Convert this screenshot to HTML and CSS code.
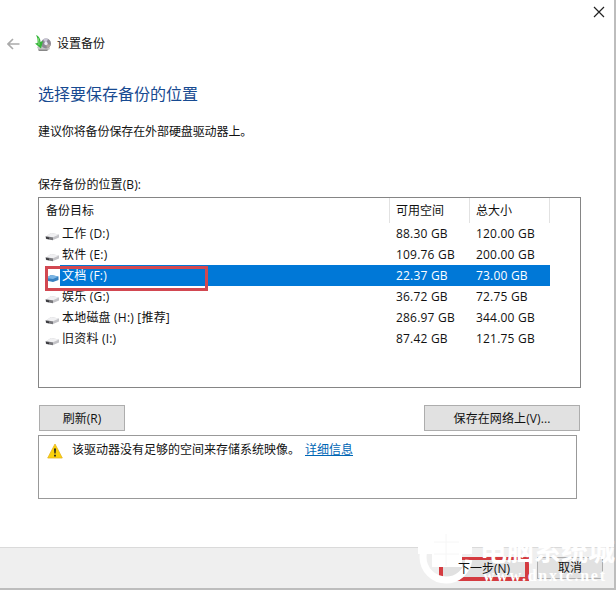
FILE: index.html
```html
<!DOCTYPE html>
<html lang="zh-CN">
<head>
<meta charset="utf-8">
<title>设置备份</title>
<link rel="stylesheet" href="styles.css">
</head>
<body>
<svg class="defs" width="0" height="0">
  <symbol id="drive" viewBox="0 0 15 9">
    <path d="M1 4.5 L6 1 L14 2.5 L14 5.5 L8 8 L1 6.5Z" fill="#c3c3c7"/>
    <path d="M1 4.3 L6 1 L14 2.5 L8 5.3Z" fill="#f0f0f2"/>
    <path d="M.5 4.3 L8 5.5 V8.2 L1 7Z" fill="#77777b"/>
    <path d="M1 5 L4 5.6 V7.2 L1 6.6Z" fill="#343438"/>
  </symbol>
</svg>
<div class="window">
  <div class="titlebar">
    <svg class="close" width="12" height="12" viewBox="0 0 12 12"><path d="M1 1 L11 11 M11 1 L1 11" stroke="#222" stroke-width="1.2"/></svg>
  </div>
  <header class="nav">
    <svg class="back" width="13" height="12" viewBox="0 0 13 12"><path d="M12.5 6 H1.2 M6 1 L1 6 L6 11" fill="none" stroke="#aaa" stroke-width="1.6"/></svg>
    <svg class="app-icon" width="17" height="17" viewBox="0 0 17 17">
      <path d="M2 12 L5 10 H14 L15 14 L12 16 H4Z" fill="#c5c5c5"/>
      <path d="M3 14.5 L13 14.5 L12 16 H4Z" fill="#888"/>
      <circle cx="11" cy="8.5" r="5" fill="#8d8994"/>
      <path d="M11 8.5 L8 4.5 A5 5 0 0 1 13 4Z" fill="#c9c6d6"/>
      <path d="M11 8.5 L15.5 10 A5 5 0 0 1 12 13.4Z" fill="#b0a6a0"/>
      <circle cx="11" cy="8.5" r="1.7" fill="#ece9f4"/>
      <path d="M1 0 C4 1 5.5 4 5.5 7 L8 6 L6 13.5 L0 8.5 L2.5 8 C2.8 5 2.5 3 1 0Z" fill="#35b53a"/>
      <path d="M3 3 Q4.2 6 4 10" fill="none" stroke="#8be07e"/>
    </svg>
    <span>设置备份</span>
  </header>
  <main class="content">
    <h1>选择要保存备份的位置</h1>
    <p class="advice">建议你将备份保存在外部硬盘驱动器上。</p>
    <p class="list-label">保存备份的位置(B):</p>
    <section class="list">
      <div class="row head"><span class="name">备份目标</span><span>可用空间</span><span>总大小</span></div>
      <div class="row"><svg><use href="#drive"/></svg><span class="name">工作 (D:)</span><span>88.30 GB</span><span>120.00 GB</span></div>
      <div class="row"><svg><use href="#drive"/></svg><span class="name">软件 (E:)</span><span>109.76 GB</span><span>200.00 GB</span></div>
      <div class="row selected"><svg viewBox="0 0 15 9"><path d="M1 4 L6 1 L13.5 2.5 V6 L8 8 L1 6.5Z" fill="#3981c0"/><path d="M1 4 L6 1 L13.5 2.5 L8 5Z" fill="#7ab5e4"/></svg><span class="name">文档 (F:)</span><span>22.37 GB</span><span>73.00 GB</span><i class="mark"></i></div>
      <div class="row"><svg><use href="#drive"/></svg><span class="name">娱乐 (G:)</span><span>36.72 GB</span><span>72.75 GB</span></div>
      <div class="row"><svg><use href="#drive"/></svg><span class="name recommended">本地磁盘 (H:) [推荐]</span><span>286.97 GB</span><span>344.00 GB</span></div>
      <div class="row"><svg><use href="#drive"/></svg><span class="name">旧资料 (I:)</span><span>87.42 GB</span><span>121.75 GB</span></div>
    </section>
    <div class="actions"><button class="refresh">刷新(R)</button><button class="network">保存在网络上(V)...</button></div>
    <section class="notice">
      <svg width="16" height="16" viewBox="0 0 16 16"><path d="M8 1 L15.3 15 H.7Z" fill="#fbd20b" stroke="#e6b422" stroke-width=".8" stroke-linejoin="round"/><path d="M7 5.5 H9 L8.6 10.5 H7.4Z M7.1 11.7 H8.9 V13.5 H7.1Z" fill="#222"/></svg>
      <span class="message">该驱动器没有足够的空间来存储系统映像。</span><a>详细信息</a>
    </section>
  </main>
  <footer><button class="next"><span>下一步(N)</span></button><button class="cancel"><span>取消</span></button></footer>
</div>
<svg class="watermark" width="200" height="66" viewBox="0 0 200 66">
  <circle cx="30" cy="33" r="23" fill="none" stroke="#fff" stroke-width="7" stroke-dasharray="116 29" stroke-dashoffset="-3"/>
  <path d="M2 23 H16 V12 H25 V4 H34 V12 H46 V23 H56 V30 H46 V43 H16 V30 H2Z" fill="#fff"/>
  <path d="M18 18 H43 M18 30 H43 M30 10 V42" stroke="#f6f6f6" fill="none"/>
  <text class="brand" x="64" y="37">电脑系统城</text>
  <text class="url" x="67" y="57" textLength="122">www.dnxtc.net</text>
</svg>
</body>
</html>
```
FILE: styles.css
```css
* { box-sizing: border-box; }
body {
  margin: 0;
  width: 616px;
  height: 590px;
  overflow: hidden;
  background: #bdbdbd;
  color: #111;
  font: 12px/21px "Open Sans", "Noto Sans CJK SC", sans-serif;
}
.defs { position: absolute; }
h1, p { margin: 0; font-weight: 400; }
button {
  padding: 0;
  border: 1px solid #adadad;
  background: #e1e1e1;
  color: #111;
  font: inherit;
}
.window {
  display: flex;
  flex-direction: column;
  width: 614px;
  height: 588px;
  background: #fff;
}
.titlebar { display: flex; justify-content: flex-end; height: 32px; padding: 6px 9px 0 0; }
.nav { display: flex; align-items: center; height: 23px; padding-left: 7px; }
.back { margin-right: 15px; }
.app-icon { margin-right: 5px; }
.content { flex: 1; padding: 27px 33px 0 38px; }
h1 { height: 24px; color: #174a91; font-size: 16px; line-height: 24px; }
.advice { height: 21px; margin-top: 15px; letter-spacing: -.1px; }
.list-label { height: 21px; margin-top: 32px; letter-spacing: .1px; }
.list { width: 543px; height: 191px; margin-top: 2px; border: 1px solid #858585; }
.row {
  position: relative;
  display: grid;
  grid-template-columns: 21px 330px 80px 80px;
  height: 21px;
  align-items: center;
}
.row svg { width: 15px; height: 9px; margin: 5px 0 0 6px; }
.row span { padding-left: 6px; white-space: nowrap; letter-spacing: .2px; }
.row .name { padding-left: 2px; letter-spacing: .2px; }
.head { grid-template-columns: 351px 80px 80px; height: 25px; }
.head span { height: 25px; line-height: 25px; border-right: 1px solid #e2e2e2; letter-spacing: 0; }
.head .name { padding-left: 7px; letter-spacing: 0; }
.selected { z-index: 1; color: #fff; }
.selected::before {
  content: "";
  position: absolute;
  inset: 0 30px 0 21px;
  z-index: -1;
  background: #0078d7;
}
.mark { position: absolute; left: 6px; top: 1px; width: 163px; height: 25px; border: 3px solid #d24851; }
.actions { display: flex; justify-content: space-between; width: 542px; height: 26px; margin-top: 17px; padding-left: 1px; }
.refresh { width: 86px; }
.network { width: 156px; letter-spacing: .1px; }
.notice { display: flex; width: 539px; height: 64px; margin-top: 4px; padding: 3px 8px; border: 1px solid #999; }
.notice svg { margin: 4px 9px 0 0; }
.message { width: 228px; }
.notice a { margin-left: 5px; color: #0066b5; text-decoration: underline; }
footer {
  display: flex;
  justify-content: flex-end;
  height: 41px;
  padding: 9px 11px 0 0;
  background: #efefef;
  border-top: 1px solid #dadada;
}
footer span { position: relative; z-index: 2; }
.next { width: 90px; height: 24px; border: 4px solid #d43b40; border-top-width: 3px; line-height: 14px; }
.cancel { width: 66px; height: 22px; margin-left: 8px; line-height: 18px; }
.watermark { position: absolute; z-index: 1; left: 416px; top: 524px; pointer-events: none; }
.brand { fill: #fff; font: 700 27px "Noto Sans CJK SC", sans-serif; }
.url { fill: #fff; font: 700 16px "Liberation Serif", serif; }
```
